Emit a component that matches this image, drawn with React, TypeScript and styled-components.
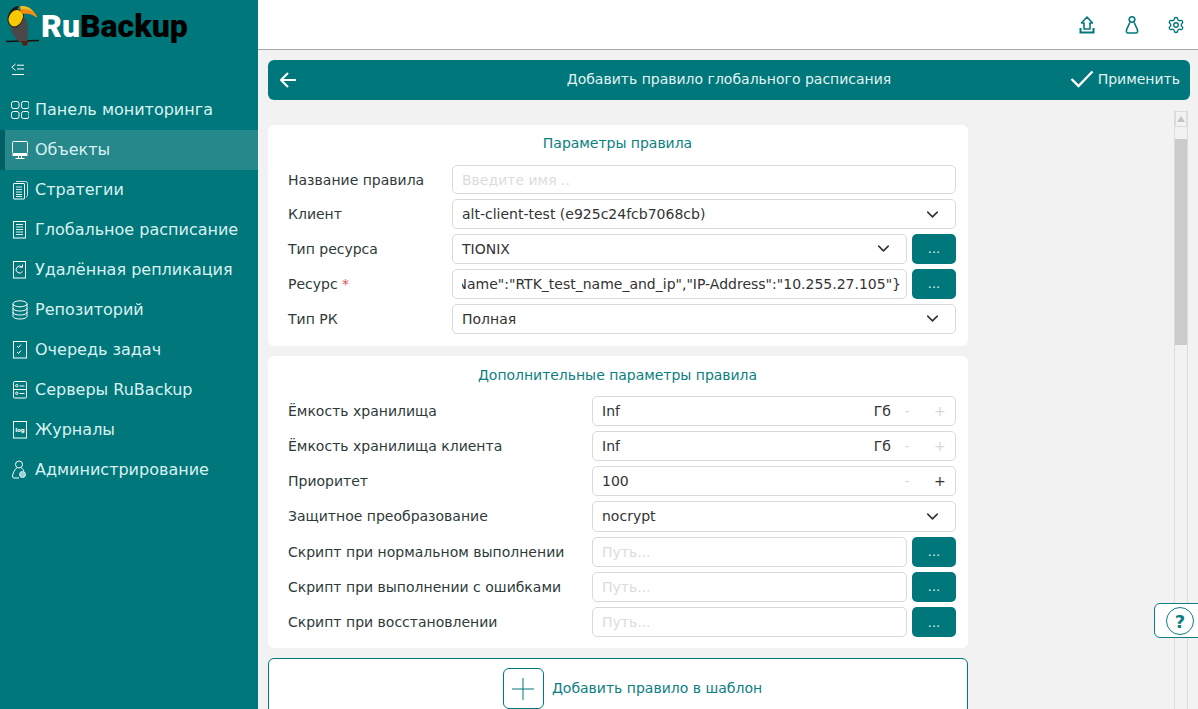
import React from "react"
import styled, { createGlobalStyle } from "styled-components"
import { ChevronDown, Settings } from "lucide-react"

const TEAL = "#00777a"

const GlobalStyle = createGlobalStyle`
    html, body {
        margin: 0;
        height: 100%;
        overflow: hidden;
        background: #f2f2f2;
        font-family: "DejaVu Sans", sans-serif;
    }
    #root { height: 100%; }
`

const Page = styled.div`
    position: relative;
    width: 1198px;
    height: 709px;
    display: grid;
    grid-template-columns: 258px 1fr;
    overflow: hidden;
`

const Sidebar = styled.aside`
    background: ${TEAL};
    display: flex;
    flex-direction: column;
`

const LogoRow = styled.div`
    height: 50px;
    display: flex;
    align-items: center;
    padding-left: 5px;
`

const LogoText = styled.div`
    margin: 2px 0 0 0;
    font-family: Roboto, sans-serif;
    font-weight: 900;
    font-size: 32px;
    letter-spacing: 0;
    color: #000;
    span { color: #fff; }
`

const CollapseRow = styled.div`
    height: 40px;
    display: flex;
    align-items: center;
    padding-left: 11px;
`

const NavItem = styled.div<{ $active?: boolean }>`
    height: 40px;
    box-sizing: border-box;
    display: flex;
    align-items: center;
    gap: 6px;
    padding-left: ${props => props.$active ? "6px" : "11px"};
    padding-bottom: 2px;
    font-size: 16px;
    color: #d9f1f1;
    background: ${props => props.$active ? "#26888b" : "transparent"};
    border-left: ${props => props.$active ? "5px solid #005f62" : "none"};
    svg { flex: none; margin-top: 2px; }
`

const Main = styled.main`
    display: flex;
    flex-direction: column;
    min-width: 0;
`

const TopBar = styled.header`
    height: 50px;
    box-sizing: border-box;
    background: #fff;
    border-bottom: 1px solid #a9a9a9;
    display: flex;
    align-items: center;
    justify-content: flex-end;
    gap: 26.5px;
    padding: 0 13px 0 0;
`

const Content = styled.div`
    padding: 10px 8px 0 10px;
`

const TitleBar = styled.div`
    height: 40px;
    box-sizing: border-box;
    padding-bottom: 2px;
    border-radius: 6px;
    background: ${TEAL};
    color: #e2f3f3;
    display: grid;
    grid-template-columns: 130px 1fr 130px;
    align-items: center;
    font-size: 14px;
`

const BackCell = styled.div`
    display: flex;
    padding: 2px 0 0 10px;
`

const TitleText = styled.div`
    text-align: center;
`

const ApplyCell = styled.div`
    display: flex;
    align-items: center;
    justify-content: flex-end;
    gap: 4px;
    padding-right: 10px;
`

const Body = styled.div`
    display: grid;
    grid-template-columns: 700px 1fr 14px 2px;
    margin-top: 10px;
    height: 609px;
`

const FormColumn = styled.div`
    padding-top: 15px;
    display: flex;
    flex-direction: column;
    gap: 10px;
`

const Card = styled.section<{ $height: number }>`
    height: ${props => props.$height}px;
    box-sizing: border-box;
    background: #fff;
    border-radius: 6px;
    padding: 0 12px 0 20px;
`

const CardTitle = styled.h2<{ $top: number, $below: number }>`
    height: 36px;
    margin: 0 9px ${props => props.$below}px 0;
    padding-top: ${props => props.$top}px;
    box-sizing: content-box;
    display: flex;
    align-items: center;
    justify-content: center;
    font-size: 14px;
    font-weight: 400;
    letter-spacing: -0.03px;
    color: #0b7f82;
`

const Rows = styled.div`
    display: flex;
    flex-direction: column;
    gap: 5px;
`

const Row = styled.div<{ $labelWidth: number, $height: number }>`
    display: grid;
    grid-template-columns: ${props => props.$labelWidth}px 1fr;
    align-items: center;
    height: ${props => props.$height}px;
    font-size: 14px;
    color: #2e3a3a;
`

const Required = styled.span`
    color: #d9534f;
`

const Control = styled.div`
    display: flex;
    gap: 5px;
    height: 100%;
    min-width: 0;
`

const Field = styled.div`
    flex: 1;
    min-width: 0;
    box-sizing: border-box;
    border: 1px solid #d9d9d9;
    border-radius: 5px;
    background: #fff;
    display: flex;
    align-items: center;
    padding: 0 11px 0 9px;
    font-size: 14px;
    color: #333;
    overflow: hidden;
    white-space: nowrap;
`

const FieldText = styled.span<{ $muted?: boolean }>`
    flex: 1;
    min-width: 0;
    color: ${props => props.$muted ? "#dcdcdc" : "#333"};
`

const ClippedValue = styled.div`
    flex: 1;
    min-width: 0;
    overflow: hidden;
    direction: rtl;
    text-align: left;
    margin-right: -6px;
    span { direction: ltr; unicode-bidi: bidi-override; }
`

const Unit = styled.span`
    color: #333;
    margin-right: 11px;
`

const Stepper = styled.span<{ $on?: boolean; $wide?: boolean }>`
    width: 10px;
    text-align: center;
    color: ${props => props.$on ? "#333" : "#d8d8d8"};
    margin-left: ${props => props.$wide ? "22px" : "0"};
`

const DotsButton = styled.div`
    width: 44px;
    flex: none;
    border-radius: 5px;
    background: ${TEAL};
    color: #dff1f1;
    font-size: 13px;
    display: flex;
    align-items: center;
    justify-content: center;
`

const ChevronSlot = styled.span`
    display: flex;
    margin-right: 2px;
`

const AddBox = styled.div`
    height: 70px;
    box-sizing: border-box;
    background: #fff;
    border: 1px solid ${TEAL};
    border-radius: 6px;
    display: flex;
    justify-content: center;
    padding: 9px 0 0 29px;
    gap: 8px;
    color: #0b7f82;
    font-size: 14px;
`

const AddIcon = styled.div`
    width: 41px;
    height: 41px;
    box-sizing: border-box;
    border: 1px solid ${TEAL};
    border-radius: 6px;
    display: flex;
    align-items: center;
    justify-content: center;
`

const AddLabel = styled.span`
    line-height: 41px;
`

const ScrollTrack = styled.div`
    grid-column: 3;
    box-sizing: border-box;
    border-left: 1px solid #dcdcdc;
    border-right: 1px solid #dcdcdc;
    display: flex;
    flex-direction: column;
    align-items: center;
`

const ScrollArrow = styled.div`
    width: 12px;
    height: 16px;
    box-sizing: border-box;
    border: 1px solid #dcdcdc;
    display: flex;
    align-items: center;
    justify-content: center;
    margin-top: 1px;
    &::before {
        content: "";
        border-left: 4px solid transparent;
        border-right: 4px solid transparent;
        border-bottom: 6px solid #c4c4c4;
    }
`

const ScrollThumb = styled.div`
    width: 12px;
    height: 206px;
    margin-top: 12px;
    background: #cbcbcb;
`

const HelpTab = styled.div`
    position: absolute;
    left: 1154px;
    top: 603px;
    width: 50px;
    height: 35px;
    box-sizing: border-box;
    background: #fff;
    border: 1px solid #0b7f82;
    border-radius: 6px;
    padding: 3px 0 0 11px;
`

const HelpCircle = styled.div`
    width: 28px;
    height: 28px;
    box-sizing: border-box;
    border: 1.5px solid #0b7f82;
    border-radius: 50%;
    color: #0b7f82;
    font-size: 18px;
    font-weight: 700;
    display: flex;
    align-items: center;
    justify-content: center;
`

const Toucan = () => (
    <svg width="36" height="46" viewBox="0 0 36 46">
        <path d="M1 39.5 L34 38.5" stroke="#1c120c" strokeWidth="1.3" />
        <path d="M5 22 C6 30 9 36 15 40 L22 40 C23 34 24 26 21 16 L8 16 Z" fill="#4d4848" />
        <path d="M16 39 L23 39 L22 43.5 L18 43.5 Z" fill="#5a1c10" />
        <path d="M2.5 17 C3 10 8 4.5 13 4 C17 4 19 8 19 12 C19 18 15 24 11 25.5 C6 26 2.5 22 2.5 17 Z" fill="#1a1a14" />
        <path d="M3.5 17.5 C4 12 8 8 12 8 C17 8.5 18.5 12 18 15 C17 20 13 24.5 9.5 24.5 C6 24.5 3.5 21 3.5 17.5 Z" fill="#f8c800" />
        <path d="M14 4.5 C20 2.5 27 6 32 14 C32.5 15.5 32 16 31 15 C27 12 22 11 18.5 12 C16 10.5 14.5 7.5 14 4.5 Z" fill="#ef8c12" />
        <path d="M15 4.5 C20 3 25 5.5 29 10 C25 7.5 20 6.5 16 7 Z" fill="#e4c024" />
        <circle cx="14" cy="6.5" r="1.4" fill="#14807a" />
    </svg>
)

const Collapse = () => (
    <svg width="14" height="14" viewBox="0 0 14 14" fill="none" stroke="#fff" strokeWidth="1">
        <path d="M4.5 1 L0.8 4.2 L4.5 7.4" />
        <path d="M6 2.2 H13 M6 6 H13 M1 11.5 H13" />
    </svg>
)

const NavIcon = ({ children }: { children: React.ReactNode }) => (
    <svg width="18" height="20" viewBox="0 0 18 20" fill="none" stroke="#fff" strokeWidth="1">
        {children}
    </svg>
)

const Lines = ({ x1, x2, ys }: { x1: number, x2: number, ys: number[] }) => (
    <path d={ys.map(y => `M${x1} ${y} H${x2}`).join(" ")} stroke="#d9f1f1" />
)

const icons: React.ReactNode[] = [
    <>
        <rect x="0.5" y="1.5" width="7.5" height="7" rx="2" />
        <rect x="10.5" y="1.5" width="7.5" height="7" rx="2" />
        <rect x="0.5" y="11.5" width="7.5" height="7" rx="2" />
        <rect x="10.5" y="11.5" width="7.5" height="7" rx="2" />
    </>,
    <>
        <rect x="1.5" y="1.5" width="15" height="12" rx="1" />
        <path d="M1.5 15 H16.5" strokeWidth="2" />
        <path d="M4.5 18.5 H13.5 M7.5 16 V18 M10.5 16 V18" />
    </>,
    <>
        <path d="M5 1.5 H14.5 Q16.5 1.5 16.5 3.5 V15.5 L15 17.5" stroke="#bfe3e3" />
        <rect x="2.5" y="3.5" width="11" height="15.5" rx="0.5" />
        <Lines x1={5} x2={11} ys={[7, 9.5, 12, 14.5, 16.5]} />
    </>,
    <>
        <rect x="2.5" y="1.5" width="12" height="16.5" />
        <Lines x1={5} x2={12} ys={[4.5, 7, 9.5, 12, 14.5]} />
    </>,
    <>
        <rect x="2.5" y="1.5" width="12" height="16.5" />
        <path d="M11 7 A3.5 3.5 0 1 0 11.5 11.5" />
        <path d="M8.5 7.2 H11.5 V4.5" />
    </>,
    <>
        <ellipse cx="9" cy="3.8" rx="7" ry="3" />
        <path d="M2 3.8 V16 C2 17.8 5 19 9 19 C13 19 16 17.8 16 16 V3.8" />
        <path d="M2 8 C2 9.8 5 11 9 11 C13 11 16 9.8 16 8 M2 12 C2 13.8 5 15 9 15 C13 15 16 13.8 16 12" />
    </>,
    <>
        <rect x="2.5" y="1.5" width="13" height="16.5" />
        <path d="M6 6 L7.5 7.5 L10 4.5 M6 12 L7.5 13.5 L10 10.5" />
    </>,
    <>
        <rect x="2.5" y="1.5" width="13" height="16.5" rx="1" />
        <path d="M2.5 9.5 H15.5 M8.5 6 H13.5 M8.5 13.5 H13.5" />
        <circle cx="5.8" cy="5.7" r="1.2" />
        <circle cx="5.8" cy="13.2" r="1.2" />
    </>,
    <>
        <rect x="2.5" y="1.5" width="13" height="16.5" />
        <text x="9" y="11.5" textAnchor="middle" fontSize="5.5" fontWeight="700" fill="#fff" stroke="none" fontFamily="DejaVu Sans">log</text>
    </>,
    <>
        <circle cx="8" cy="4.5" r="3.5" />
        <path d="M5.5 8 C3.5 10 2 13 1.5 16 Q1.5 18 3 18 H8 M10.5 8 C11.5 9 12.5 10 13 11" />
        <circle cx="11.5" cy="14.5" r="3" fill="#9fd0d0" stroke="#d9f1f1" />
    </>,
]

const navLabels = [
    "Панель мониторинга",
    "Объекты",
    "Стратегии",
    "Глобальное расписание",
    "Удалённая репликация",
    "Репозиторий",
    "Очередь задач",
    "Серверы RuBackup",
    "Журналы",
    "Администрирование",
]

const SelectField = ({ value }: { value: string }) => (
    <Field>
        <FieldText>{value}</FieldText>
        <ChevronSlot><ChevronDown size={19} color="#333" strokeWidth={2} /></ChevronSlot>
    </Field>
)

const StepField = ({ value, unit, plusOn }: { value: string, unit?: string, plusOn?: boolean }) => (
    <Field>
        <FieldText>{value}</FieldText>
        {unit && <Unit>{unit}</Unit>}
        <Stepper>-</Stepper>
        <Stepper $on={plusOn} $wide>+</Stepper>
    </Field>
)

const PathField = () => (
    <Control>
        <Field><FieldText $muted>Путь...</FieldText></Field>
        <DotsButton>...</DotsButton>
    </Control>
)

const App = () => {
    return (
        <Page>
            <GlobalStyle />
            <Sidebar>
                <LogoRow>
                    <Toucan />
                    <LogoText><span>Ru</span>Backup</LogoText>
                </LogoRow>
                <CollapseRow><Collapse /></CollapseRow>
                {navLabels.map((label, i) => (
                    <NavItem key={label} $active={i === 1}>
                        <NavIcon>{icons[i]}</NavIcon>
                        {label}
                    </NavItem>
                ))}
            </Sidebar>
            <Main>
                <TopBar>
                    <svg width="18" height="20" viewBox="0 0 18 20" fill="none" stroke={TEAL} strokeWidth="1.6">
                        <path d="M9 2 L14.5 8 H12 V14 H6 V8 H3.5 Z" strokeLinejoin="round" />
                        <path d="M2.5 13 V17.5 H15.5 V13" strokeWidth="2" />
                    </svg>
                    <svg width="18" height="20" viewBox="0 0 18 20" fill="none" stroke={TEAL} strokeWidth="1.6">
                        <circle cx="9" cy="4.5" r="2.8" />
                        <path d="M6.8 7.5 L3.5 15 Q3 18 5 18 H13 Q15 18 14.5 15 L11.2 7.5" />
                    </svg>
                    <Settings size={18} color={TEAL} strokeWidth={1.8} />
                </TopBar>
                <Content>
                    <TitleBar>
                        <BackCell>
                            <svg width="20" height="20" viewBox="0 0 20 20" fill="none" stroke="#fff" strokeWidth="2">
                                <path d="M18 10 H3 M10 3 L3 10 L10 17" />
                            </svg>
                        </BackCell>
                        <TitleText>Добавить правило глобального расписания</TitleText>
                        <ApplyCell>
                            <svg width="24" height="20" viewBox="0 0 24 20" fill="none" stroke="#fff" strokeWidth="2.4">
                                <path d="M1.5 10 L8.5 17 L22.5 2.5" />
                            </svg>
                            Применить
                        </ApplyCell>
                    </TitleBar>
                    <Body>
                        <FormColumn>
                            <Card $height={221}>
                                <CardTitle $top={0} $below={4}>Параметры правила</CardTitle>
                                <Rows>
                                    <Row $labelWidth={164} $height={29.4}>
                                        Название правила
                                        <Control><Field><FieldText $muted>Введите имя ..</FieldText></Field></Control>
                                    </Row>
                                    <Row $labelWidth={164} $height={29.6}>
                                        Клиент
                                        <Control><SelectField value="alt-client-test (e925c24fcb7068cb)" /></Control>
                                    </Row>
                                    <Row $labelWidth={164} $height={30}>
                                        Тип ресурса
                                        <Control>
                                            <SelectField value="TIONIX" />
                                            <DotsButton>...</DotsButton>
                                        </Control>
                                    </Row>
                                    <Row $labelWidth={164} $height={30}>
                                        <span>Ресурс <Required>*</Required></span>
                                        <Control>
                                            <Field>
                                                <ClippedValue>
                                                    <span>{'{"Name":"RTK_test_name_and_ip","IP-Address":"10.255.27.105"}'}</span>
                                                </ClippedValue>
                                            </Field>
                                            <DotsButton>...</DotsButton>
                                        </Control>
                                    </Row>
                                    <Row $labelWidth={164} $height={29.6}>
                                        Тип РК
                                        <Control><SelectField value="Полная" /></Control>
                                    </Row>
                                </Rows>
                            </Card>
                            <Card $height={292}>
                                <CardTitle $top={1} $below={2.5}>Дополнительные параметры правила</CardTitle>
                                <Rows>
                                    <Row $labelWidth={304} $height={30.25}>
                                        Ёмкость хранилища
                                        <Control><StepField value="Inf" unit="Гб" /></Control>
                                    </Row>
                                    <Row $labelWidth={304} $height={30.25}>
                                        Ёмкость хранилища клиента
                                        <Control><StepField value="Inf" unit="Гб" /></Control>
                                    </Row>
                                    <Row $labelWidth={304} $height={30.25}>
                                        Приоритет
                                        <Control><StepField value="100" plusOn /></Control>
                                    </Row>
                                    <Row $labelWidth={304} $height={30.25}>
                                        Защитное преобразование
                                        <Control><SelectField value="nocrypt" /></Control>
                                    </Row>
                                    <Row $labelWidth={304} $height={30.25}>
                                        Скрипт при нормальном выполнении
                                        <PathField />
                                    </Row>
                                    <Row $labelWidth={304} $height={30.25}>
                                        Скрипт при выполнении с ошибками
                                        <PathField />
                                    </Row>
                                    <Row $labelWidth={304} $height={30.25}>
                                        Скрипт при восстановлении
                                        <PathField />
                                    </Row>
                                </Rows>
                            </Card>
                            <AddBox>
                                <AddIcon>
                                    <svg width="22" height="22" viewBox="0 0 22 22" stroke={TEAL} strokeWidth="1">
                                        <path d="M11 0 V22 M0 11 H22" />
                                    </svg>
                                </AddIcon>
                                <AddLabel>Добавить правило в шаблон</AddLabel>
                            </AddBox>
                        </FormColumn>
                        <ScrollTrack>
                            <ScrollArrow />
                            <ScrollThumb />
                        </ScrollTrack>
                    </Body>
                </Content>
            </Main>
            <HelpTab>
                <HelpCircle>?</HelpCircle>
            </HelpTab>
        </Page>
    )
}

export default App
